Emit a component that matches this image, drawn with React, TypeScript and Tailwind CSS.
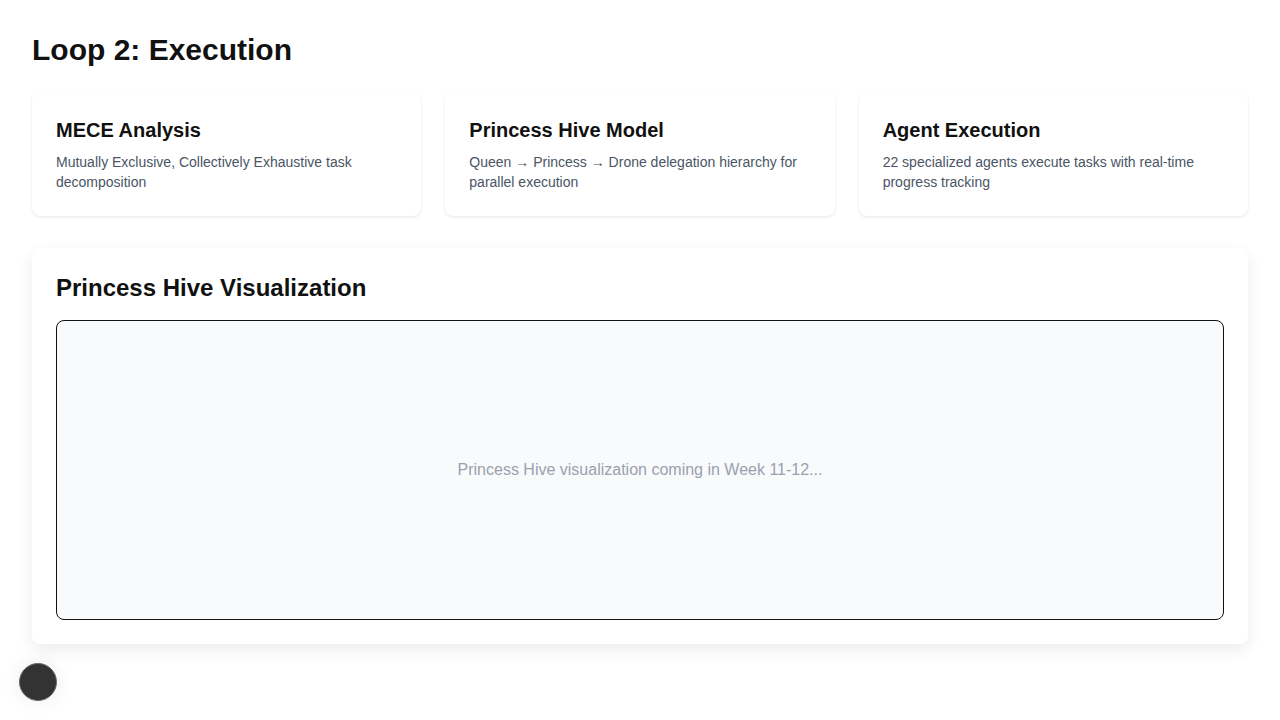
export default function App() {
  const cards = [
    {
      title: 'MECE Analysis',
      desc: 'Mutually Exclusive, Collectively Exhaustive task decomposition',
    },
    {
      title: 'Princess Hive Model',
      desc: 'Queen → Princess → Drone delegation hierarchy for parallel execution',
    },
    {
      title: 'Agent Execution',
      desc: '22 specialized agents execute tasks with real-time progress tracking',
    },
  ];

  return (
    <div className="min-h-screen bg-white p-8 text-[#111] font-['Liberation_Sans',Arial,sans-serif]">
      <h1 className="text-3xl font-bold mb-6">Loop 2: Execution</h1>

      <div className="grid grid-cols-3 gap-6 mb-8">
        {cards.map((c) => (
          <div key={c.title} className="bg-white rounded-lg p-6 shadow-[0_1px_3px_rgba(0,0,0,0.1)]">
            <h2 className="text-xl font-bold mb-2">{c.title}</h2>
            <p className="text-sm text-gray-600">{c.desc}</p>
          </div>
        ))}
      </div>

      <div className="bg-white rounded-lg p-6 shadow-[0_6px_16px_rgba(0,0,0,0.08)]">
        <h2 className="text-2xl font-bold mb-4">Princess Hive Visualization</h2>
        <div className="h-[300px] rounded-lg border border-[#111] bg-gray-50 flex items-center justify-center">
          <p className="text-gray-400">Princess Hive visualization coming in Week 11-12...</p>
        </div>
      </div>

      <div className="fixed left-[19px] bottom-[19px] w-[38px] h-[38px] rounded-full bg-[#333] border border-[#666] shadow-[0_0_20px_rgba(0,0,0,0.08)]" />
    </div>
  );
}
